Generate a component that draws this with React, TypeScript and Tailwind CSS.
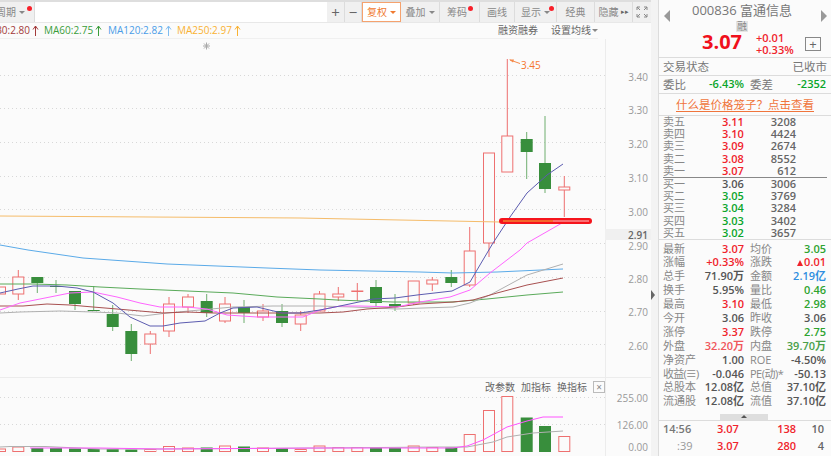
import React from 'react';

type Candle = { x: number; up: boolean; top: number; bot: number; hi: number; lo: number };

const candles: Candle[] = [
  { x: 0, up: true, top: 287, bot: 294, hi: 287, lo: 294 },
  { x: 18.3, up: true, top: 277, bot: 294, hi: 270, lo: 300 },
  { x: 37.3, up: false, top: 277, bot: 283, hi: 277, lo: 293 },
  { x: 56, up: false, top: 286, bot: 287, hi: 280, lo: 293 },
  { x: 75, up: false, top: 291, bot: 304, hi: 291, lo: 310 },
  { x: 93.7, up: false, top: 310, bot: 311, hi: 286, lo: 311 },
  { x: 112.7, up: false, top: 314, bot: 327, hi: 305, lo: 331 },
  { x: 131.3, up: false, top: 331, bot: 354, hi: 324, lo: 361 },
  { x: 150.3, up: true, top: 334, bot: 344, hi: 331, lo: 354 },
  { x: 169, up: true, top: 304, bot: 331, hi: 297, lo: 337 },
  { x: 188, up: true, top: 297, bot: 307, hi: 294, lo: 313 },
  { x: 206.7, up: false, top: 301, bot: 313, hi: 294, lo: 317 },
  { x: 225, up: true, top: 304, bot: 321, hi: 297, lo: 323 },
  { x: 244, up: false, top: 307, bot: 313, hi: 300, lo: 323 },
  { x: 263, up: true, top: 311, bot: 317, hi: 304, lo: 321 },
  { x: 282, up: false, top: 311, bot: 323, hi: 304, lo: 327 },
  { x: 300.7, up: true, top: 315, bot: 324, hi: 311, lo: 331 },
  { x: 319.5, up: true, top: 294, bot: 311, hi: 291, lo: 311 },
  { x: 338.3, up: true, top: 294, bot: 297, hi: 287, lo: 301 },
  { x: 357.3, up: true, top: 291, bot: 291.5, hi: 283, lo: 301 },
  { x: 376, up: false, top: 287, bot: 303, hi: 280, lo: 307 },
  { x: 395, up: false, top: 304, bot: 307, hi: 294, lo: 311 },
  { x: 413.7, up: true, top: 281, bot: 303, hi: 281, lo: 305 },
  { x: 432.3, up: true, top: 280, bot: 284, hi: 277, lo: 291 },
  { x: 451.3, up: false, top: 277, bot: 283, hi: 270, lo: 287 },
  { x: 469.7, up: true, top: 251, bot: 285, hi: 227, lo: 287 },
  { x: 489, up: true, top: 153, bot: 243, hi: 153, lo: 257 },
  { x: 507.3, up: true, top: 136, bot: 172, hi: 59, lo: 172 },
  { x: 526.7, up: false, top: 139, bot: 152, hi: 132, lo: 179 },
  { x: 545, up: false, top: 163, bot: 189, hi: 116, lo: 193 },
  { x: 564.3, up: true, top: 187, bot: 190, hi: 176, lo: 217 },
];

const volTops = [
  449, 447, 448, 448, 448.5, 449, 449, 449.5, 449.5, 446.5, 448, 447.5, 446, 446.5, 448, 448, 449.5,
  446, 447.5, 447.5, 447.5, 448, 446, 447.5, 447.5, 434.5, 410.5, 396.5, 417.5, 426, 436.5,
];

const ma5 = '0,293 18,289 33,286 57,286 77,288 93,292 113,303 130,317 150,326 163,326 180,323 205,321 220,313 233,308 257,307 282,313 300,313 320,310 340,306 373,299 395,298 417,295 452,291 470,282 477,270 493,243 510,217 527,193 547,175 563,164';
const ma10 = '0,310 20,303 50,297 70,293 93,292 117,297 140,303 160,307 187,307 207,309 227,315 257,317 283,317 303,317 320,310 340,306 360,306 397,307 420,302 450,297 470,290 490,273 520,250 527,243 562,223';
const ma20 = '0,313 20,312 60,311 93,312 117,313 143,316 167,313 200,310 233,307 273,306 320,306 353,307 397,309 423,308 453,307 470,303 490,295 527,275 563,264';
const ma30 = '0,306 23,306 47,304 70,305 93,307 117,309 140,311 163,313 187,312 213,313 243,313 280,313 320,313 343,312 367,309 397,307 420,304 453,302 473,300 497,293 527,285 563,278';
const ma60 = '0,284 33,284 67,285 100,287 140,289 187,291 233,293 277,297 320,299 337,300 363,301 393,302 453,302 487,299 527,295 563,292';
const ma120 = '0,245 28,250 83,258 167,264 267,268 320,270 420,272 453,273 497,272 563,269';
const ma250 = '0,216 300,218 500,222';
const volMa1 = '30,448 100,448 160,449 320,448 453,448 467,446 483,440 507,427 527,421 543,417 563,417';
const volMa2 = '0,447 10,446.5 45,446.5 100,449 160,449 320,448 437,447 467,447 493,442 507,437 533,433 563,431';

const gridYs = [75, 108, 142, 176, 209, 243, 277, 311, 344, 397, 424];
const axisLabels: [string, number][] = [
  ['3.40', 77], ['3.30', 110], ['3.20', 144], ['3.10', 178], ['3.00', 212], ['2.90', 246],
  ['2.80', 279], ['2.70', 312], ['2.60', 346], ['255.00', 398], ['126.00', 425], ['0.00', 447],
];

const sell = [
  ['卖五', '3.11', '3208'], ['卖四', '3.10', '4424'], ['卖三', '3.09', '2674'], ['卖二', '3.08', '8552'], ['卖一', '3.07', '612'],
];
const buy = [
  ['买一', '3.06', '3006', 'text-[#555]'], ['买二', '3.05', '3769', 'text-[#0aa52a]'], ['买三', '3.04', '3284', 'text-[#0aa52a]'],
  ['买四', '3.03', '3402', 'text-[#0aa52a]'], ['买五', '3.02', '3657', 'text-[#0aa52a]'],
];

const RED = 'text-[#f0232b]';
const GREEN = 'text-[#2ea32e]';
const DARK = 'text-[#555]';

const stats: [string, string, string, string, string, string][] = [
  ['最新', '3.07', RED, '均价', '3.05', GREEN],
  ['涨幅', '+0.33%', RED, '涨跌', '0.01', RED],
  ['总手', '71.90万', DARK, '金额', '2.19亿', 'text-[#2f8fe0]'],
  ['换手', '5.95%', DARK, '量比', '0.46', GREEN],
  ['最高', '3.10', RED, '最低', '2.98', GREEN],
  ['今开', '3.06', DARK, '昨收', '3.06', DARK],
  ['涨停', '3.37', RED, '跌停', '2.75', GREEN],
  ['外盘', '32.20万', 'text-[#f0565b]', '内盘', '39.70万', 'text-[#4aa04a]'],
  ['净资产', '1.00', DARK, 'ROE', '-4.50%', DARK],
  ['收益(≡)', '-0.046', DARK, 'PE(动)*', '-50.13', DARK],
  ['总股本', '12.08亿', DARK, '总值', '37.10亿', DARK],
  ['流通股', '12.08亿', DARK, '流值', '37.10亿', DARK],
];

const Caret = ({ orange }: { orange?: boolean }) => (
  <span className={`ml-[3px] h-0 w-0 border-x-[3px] border-t-[3px] border-x-transparent ${orange ? 'border-t-[#f07a30]' : 'border-t-[#888]'}`} />
);

const UpArrow = ({ color }: { color: string }) => (
  <svg className="ml-[2px] shrink-0" width="7" height="12" viewBox="0 0 7 12" fill="none" stroke={color} strokeWidth="1">
    <path d="M3.5 1V11M1 4.5L3.5 1L6 4.5" />
  </svg>
);

const ToolBtn = ({ w, children, dot }: { w: string; children: React.ReactNode; dot?: string }) => (
  <div className={`relative flex h-full items-center justify-center border-r border-[#dcdcdc] bg-[#f0f0f0] text-[10px] text-[#888] ${w}`}>
    {children}
    {dot && <span className={`absolute top-[4px] h-[5px] w-[5px] rounded-full bg-[#f8202a] ${dot}`} />}
  </div>
);

const Chart = () => (
  <svg className="block h-[417px] w-[651px]" viewBox="0 39 651 417">
    <rect x="605" y="39" width="46" height="417" fill="#fbfbfb" />
    <line x1="605.5" y1="39" x2="605.5" y2="456" stroke="#ececec" />
    <line x1="0" y1="377.5" x2="651" y2="377.5" stroke="#ececec" />
    {gridYs.map(y => (
      <line key={y} x1="0" y1={y + 0.5} x2="605" y2={y + 0.5} stroke="#d8d8d8" strokeDasharray="1 3" />
    ))}
    <rect x="605" y="229" width="46" height="11" fill="#f0f0f0" />
    {axisLabels.map(([t, y]) => (
      <text key={t} x="648" y={y + 4} textAnchor="end" fontSize="10" fill="#999">{t}</text>
    ))}
    <text x="648" y="238.5" textAnchor="end" fontSize="10" fontWeight="600" fill="#666">2.91</text>

    {/* star mark */}
    <g stroke="#aaa" strokeWidth="1">
      <line x1="203" y1="46" x2="210" y2="46" />
      <line x1="206.5" y1="42.5" x2="206.5" y2="49.5" />
      <line x1="204" y1="43.5" x2="209" y2="48.5" />
      <line x1="209" y1="43.5" x2="204" y2="48.5" />
    </g>

    {candles.map(c =>
      c.up ? (
        <g key={c.x} stroke="#ee7070" strokeWidth="1">
          <line x1={c.x} y1={c.hi} x2={c.x} y2={c.top} />
          <line x1={c.x} y1={c.bot} x2={c.x} y2={c.lo} />
          <rect x={c.x - 5.5} y={c.top} width="11" height={c.bot - c.top} fill="#fbfbfb" />
        </g>
      ) : (
        <g key={c.x}>
          <line x1={c.x} y1={c.hi} x2={c.x} y2={c.lo} stroke="#6fae6f" strokeWidth="1" />
          <rect x={c.x - 6} y={c.top} width="12" height={c.bot - c.top} fill="#388e3c" />
        </g>
      )
    )}

    <polyline points={ma250} fill="none" stroke="#f5bc6a" strokeWidth="1" />
    <polyline points={ma120} fill="none" stroke="#5aaae8" strokeWidth="1" />
    <polyline points={ma60} fill="none" stroke="#5aaa5a" strokeWidth="1" />
    <polyline points={ma20} fill="none" stroke="#b0b0b0" strokeWidth="1" />
    <polyline points={ma30} fill="none" stroke="#a85050" strokeWidth="1" />
    <polyline points={ma10} fill="none" stroke="#ff66ff" strokeWidth="1" />
    <polyline points={ma5} fill="none" stroke="#5c5cb0" strokeWidth="1" />

    {/* high marker */}
    <line x1="510" y1="60" x2="520" y2="63.5" stroke="#f58a4a" strokeWidth="1" />
    <path d="M509 59.5 L514 59.5 L513 62.5 Z" fill="#f58a4a" />
    <text x="521" y="69" fontSize="10" fill="#f5752d">3.45</text>

    {/* hand drawn red bar */}
    <rect x="499" y="218" width="93" height="6" rx="3" fill="#f5141c" />
    <line x1="503" y1="221" x2="553" y2="221" stroke="#f5b93a" strokeWidth="1" />
    <line x1="553" y1="221" x2="589" y2="221" stroke="#ffc9c9" strokeWidth="1" />

    {/* volume */}
    {candles.map((c, i) =>
      c.up ? (
        <rect key={c.x} x={c.x - 5.5} y={volTops[i]} width="11" height={451.5 - volTops[i]} fill="#fbfbfb" stroke="#ee7070" strokeWidth="1" />
      ) : (
        <rect key={c.x} x={c.x - 6} y={volTops[i]} width="12" height={452 - volTops[i]} fill="#388e3c" />
      )
    )}
    <polyline points={volMa2} fill="none" stroke="#b0b0b0" strokeWidth="1" />
    <polyline points={volMa1} fill="none" stroke="#ff55ff" strokeWidth="1" />
  </svg>
);

const App: React.FC = () => {
  return (
    <div className="flex h-[456px] w-[831px] overflow-hidden bg-[#fbfbfb] font-['Open_Sans','Noto_Sans_CJK_SC',sans-serif]">
      <div className="flex w-[651px] shrink-0 flex-col">
        <div className="h-[2px] bg-[#dedede]" />
        {/* toolbar */}
        <div className="flex h-[21px] items-stretch border-b border-[#e8e8e8] bg-white">
          <div className="relative flex w-[35px] items-center justify-end overflow-hidden border-r border-[#dcdcdc] bg-[#f0f0f0] pr-[9px] text-[10px] text-[#888]">
            <span className="whitespace-nowrap">周期</span>
            <Caret />
            <span className="absolute right-[2px] top-[4px] h-[5px] w-[5px] rounded-full bg-[#f8202a]" />
          </div>
          <div className="flex-1" />
          <ToolBtn w="w-[18px]"><span className="text-[15px] text-[#666]">+</span></ToolBtn>
          <ToolBtn w="w-[17px]"><span className="text-[15px] text-[#666]">−</span></ToolBtn>
          <div className="flex w-[39px] items-center justify-center border border-[#f5a26e] bg-white text-[10px] text-[#f07a30]">
            复权<Caret orange />
          </div>
          <ToolBtn w="w-[39px]">叠加<Caret /></ToolBtn>
          <ToolBtn w="w-[40px] pr-[5px]" dot="right-[6px]">筹码</ToolBtn>
          <ToolBtn w="w-[35px]">画线</ToolBtn>
          <ToolBtn w="w-[42px]" dot="right-[2px]">显示<Caret /></ToolBtn>
          <ToolBtn w="w-[38px]">经典</ToolBtn>
          <ToolBtn w="w-[38px]">隐藏<span className="ml-[2px] text-[7px] text-[#666]">▸▸</span></ToolBtn>
          <div className="flex w-[18px] items-center justify-center bg-[#f0f0f0]">
            <svg width="12" height="12" viewBox="0 0 12 12" fill="none" stroke="#888" strokeWidth="1">
              <path d="M4 1H1V4M8 1H11V4M4 11H1V8M8 11H11V8M1 1L4 4M11 1L8 4M1 11L4 8M11 11L8 8" />
            </svg>
          </div>
        </div>
        {/* MA legend */}
        <div className="flex h-[16px] items-center overflow-hidden text-[10px] whitespace-nowrap">
          <div className="flex h-[16px] w-[598px] items-center border-b border-[#f0f0f0]">
            <span className="flex w-[44px] shrink-0 items-center justify-end overflow-hidden pr-[5px] text-[#a33a3a]">MA30:2.80<UpArrow color="#a33a3a" /></span>
            <span className="flex w-[64px] shrink-0 items-center text-[#3a9d3a]">MA60:2.75<UpArrow color="#3a9d3a" /></span>
            <span className="flex w-[69px] shrink-0 items-center text-[#4a9de8]">MA120:2.82<UpArrow color="#80bdf0" /></span>
            <span className="flex w-[70px] shrink-0 items-center text-[#f9b233]">MA250:2.97<UpArrow color="#f9b233" /></span>
            <span className="ml-auto text-[#666]">融资融券</span>
            <span className="ml-[13px] flex items-center text-[#666]">
              设置均线
              <span className="ml-[1px] h-0 w-0 border-x-[3px] border-t-[3px] border-x-transparent border-t-[#888]" />
            </span>
          </div>
        </div>
        <div className="relative">
          <Chart />
          <div className="absolute left-[485px] top-[342px] flex items-center gap-[6px] text-[10px] leading-[12px] text-[#666]">
            <span className="w-[30px] whitespace-nowrap">改参数</span>
            <span className="w-[30px] whitespace-nowrap">加指标</span>
            <span className="w-[30px] whitespace-nowrap">换指标</span>
            <span className="flex h-[12px] w-[12px] items-center justify-center border border-[#bbb] text-[10px] text-[#888]">×</span>
          </div>
        </div>
      </div>

      {/* collapse gutter */}
      <div className="flex w-[7px] shrink-0 items-center bg-[#f3f3f3] pt-[134px]">
        <span className="h-0 w-0 border-y-[5px] border-l-[4px] border-y-transparent border-l-[#666]" />
      </div>

      {/* quote panel */}
      <div className="flex w-[173px] shrink-0 flex-col border-l border-[#dcdcdc] bg-[#fbfbfb] text-[11px]">
        <div className="relative h-[58px] border-b border-[#dcdcdc]">
          <div className="flex h-[21px] items-center justify-center pr-[6px] pt-[1px] text-[13px] text-[#777]">000836 富通信息</div>
          <span className="absolute left-[5px] top-[10px] h-0 w-0 border-y-[6px] border-r-[6px] border-y-transparent border-r-[#999]" />
          <span className="absolute right-[4px] top-[10px] h-0 w-0 border-y-[6px] border-l-[6px] border-y-transparent border-l-[#999]" />
          <div className="flex justify-center pr-[6px]">
            <span className="flex h-[11px] w-[12px] items-center justify-center bg-[#e4e4e4] text-[10px] text-[#888]">融</span>
          </div>
          <div className="flex items-center pl-[43px]">
            <span className="w-[54px] self-start text-[20px] leading-[20px] font-bold text-[#f0101c]">3.07</span>
            <span className="w-[49px] text-[11px] leading-[12px] font-semibold text-[#f0232b]">
              +0.01<br />+0.33%
            </span>
            <span className="flex h-[14px] w-[16px] items-center justify-center border border-[#888] text-[13px] leading-[12px] text-[#666]">+</span>
          </div>
        </div>
        <div className="flex h-[18px] items-center justify-between border-b border-[#dcdcdc] px-[4px] text-[11.5px] text-[#777]">
          <span>交易状态</span>
          <span>已收市</span>
        </div>
        <div className="flex h-[18px] items-center border-b border-[#dcdcdc] px-[4px]">
          <span className="w-[28px] text-[11.5px] text-[#777]">委比</span>
          <span className="w-[53px] text-right font-semibold text-[#0aa52a]">-6.43%</span>
          <span className="ml-[6px] w-[28px] text-[11.5px] text-[#777]">委差</span>
          <span className="w-[48px] text-right font-semibold text-[#0aa52a]">-2352</span>
        </div>
        <div className="flex h-[21px] items-center justify-center text-[11.5px] text-[#f0753c] underline underline-offset-2">
          什么是价格笼子？点击查看
        </div>
        {/* order book */}
        <div className="flex flex-col border-y border-[#dcdcdc] px-[4px] leading-[12px]">
          <div className="flex flex-col">
            {sell.map(r => (
              <div key={r[0]} className="flex h-[12.2px] items-center">
                <span className="w-[59px] text-[#888]">{r[0]}</span>
                <span className={`w-[24px] font-semibold ${RED}`}>{r[1]}</span>
                <span className="w-[50px] text-right font-semibold text-[#666]">{r[2]}</span>
              </div>
            ))}
          </div>
          <div className="h-px bg-[#888]" />
          <div className="flex flex-col">
            {buy.map(r => (
              <div key={r[0]} className="flex h-[12.2px] items-center">
                <span className="w-[59px] text-[#888]">{r[0]}</span>
                <span className={`w-[24px] font-semibold ${r[3]}`}>{r[1]}</span>
                <span className="w-[50px] text-right font-semibold text-[#666]">{r[2]}</span>
              </div>
            ))}
          </div>
        </div>
        {/* stats */}
        <div className="flex flex-col px-[4px] pt-[2px]">
          {stats.map(r => (
            <div key={r[0]} className="flex h-[13.9px] items-center whitespace-nowrap">
              <div className="flex w-[81px] justify-between">
                <span className={`text-[#888] ${r[0] === '收益(≡)' ? 'tracking-[-0.8px]' : ''}`}>{r[0]}</span>
                <span className={`font-semibold ${r[2]}`}>{r[1]}</span>
              </div>
              <div className="ml-[6px] flex w-[76px] justify-between">
                <span className={`text-[#888] ${r[3] === 'PE(动)*' ? 'tracking-[-0.5px]' : ''}`}>{r[3]}</span>
                <span className={`flex items-center font-semibold ${r[5]}`}>
                  {r[3] === '涨跌' && (
                    <span className="mr-[1px] h-0 w-0 border-x-[3.5px] border-b-[6px] border-x-transparent border-b-[#f0232b]" />
                  )}
                  {r[4]}
                </span>
              </div>
            </div>
          ))}
        </div>
        <div className="mt-[5px] flex justify-center pr-[2px]">
          <span className="flex h-[6px] w-[48px] items-center justify-center bg-[#dedede]">
            <span className="h-0 w-0 border-x-[3px] border-b-[3px] border-x-transparent border-b-[#555]" />
          </span>
        </div>
        <div className="border-t border-[#dcdcdc] px-[4px] font-semibold">
          <div className="flex h-[17px] items-center">
            <span className="w-[54px] text-[#777]">14:56</span>
            <span className={`w-[22px] ${RED}`}>3.07</span>
            <span className={`w-[57px] text-right ${RED}`}>138</span>
            <span className="w-[28px] text-right text-[#666]">10</span>
          </div>
          <div className="flex h-[17px] items-center">
            <span className="w-[54px] pl-[14px] font-normal text-[#999]">:39</span>
            <span className={`w-[22px] ${RED}`}>3.07</span>
            <span className={`w-[57px] text-right ${RED}`}>280</span>
            <span className="w-[28px] text-right text-[#666]">4</span>
          </div>
        </div>
      </div>
    </div>
  );
};

export default App;
